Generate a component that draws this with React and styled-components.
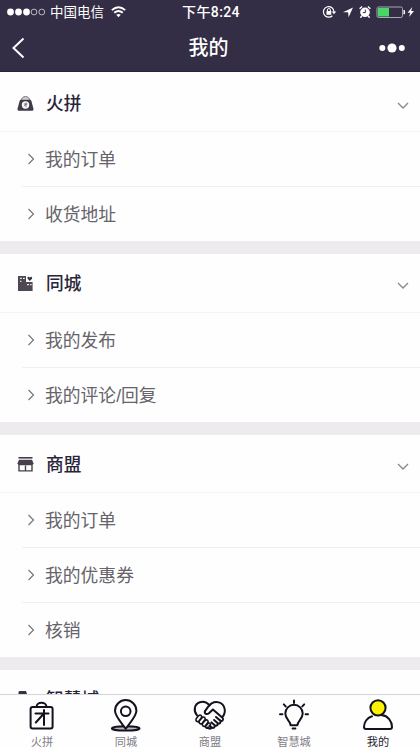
import React from "react";
import styled, { createGlobalStyle } from "styled-components";

const GlobalStyle = createGlobalStyle`
  * { box-sizing: border-box; }
  body {
    margin: 0;
    background: #fefefe;
    font-family: "Liberation Sans", "Noto Sans CJK SC", sans-serif;
  }
  svg { display: block; flex: none; }
`;

const Screen = styled.div`
  width: 420px;
  height: 748px;
  display: flex;
  flex-direction: column;
  overflow: hidden;
  background: #fefefe;
`;

const TopBar = styled.header`
  flex: none;
  height: 72px;
  background: #332d45;
  border-bottom: 1px solid #292438;
  color: #fff;
`;

const StatusBar = styled.div`
  height: 24px;
  display: grid;
  grid-template-columns: 1fr auto 1fr;
  align-items: center;
  padding: 0 5px 0 7px;
  font-size: 13.5px;
  line-height: 24px;
`;

const StatusSide = styled.div`
  display: flex;
  align-items: center;
  justify-content: ${(p) => (p.$end ? "flex-end" : "flex-start")};
`;

const Carrier = styled.span`
  margin: 0 7px 0 4px;
  padding-top: 1px;
  line-height: 23px;
`;

const Clock = styled.span`
  font-family: Roboto, "Noto Sans CJK SC", sans-serif;
  font-size: 14px;
  font-weight: 500;
  letter-spacing: 0.4px;
`;

const TitleBar = styled.div`
  height: 47px;
  display: grid;
  grid-template-columns: 1fr auto 1fr;
  align-items: center;
  padding: 0 15px 0 12px;
`;

const Title = styled.h1`
  margin: 0;
  padding-top: 1px;
  font-size: 20px;
  line-height: 28px;
  font-weight: 500;
`;

const More = styled.div`
  justify-self: end;
`;

const List = styled.main`
  flex: 1;
  min-height: 0;
  overflow: hidden;
`;

const Section = styled.section`
  border-bottom: 13px solid #edebee;
`;

const SectionHead = styled.div`
  height: ${(p) => p.$height}px;
  display: flex;
  align-items: center;
  padding: ${(p) => p.$top}px 11px 0 17px;
  border-bottom: 1px solid #f3f2f4;
`;

const SectionTitle = styled.h2`
  flex: 1;
  margin: 0 0 0 12px;
  padding-top: 1px;
  color: #29243a;
  font-size: 17.7px;
  line-height: 26px;
  font-weight: 500;
`;

const ToggleIcon = styled.span`
  padding-top: 5px;
`;

const Row = styled.div`
  height: 55px;
  margin-left: 22px;
  padding: 0 0 0 5px;
  display: flex;
  align-items: center;
  gap: 10px;
  color: #66636a;
  font-size: 17.8px;
  border-bottom: 1px solid #f0eff1;
  &:last-child {
    height: 54px;
    border-bottom: 0;
  }
`;

const RowLabel = styled.span`
  line-height: 26px;
  padding-top: 2px;
`;

const TabBar = styled.nav`
  flex: none;
  height: 54px;
  display: grid;
  grid-template-columns: repeat(5, 84px);
  border-top: 1px solid #d5d4d8;
  background: #fefefe;
`;

const Tab = styled.div`
  display: flex;
  flex-direction: column;
  align-items: center;
  padding-top: 4px;
  color: ${(p) => (p.$active ? "#26222f" : "#807d85")};
  font-size: 11.2px;
  line-height: 16px;
`;

const TabLabel = styled.span`
  margin-top: 2px;
`;

function Signal() {
  return (
    <svg width="39" height="10" viewBox="0 0 39 10">
      {[3.5, 11.5, 19.5].map((x) => <circle key={x} cx={x} cy="5" r="3.4" fill="#fff" />)}
      {[27, 34.8].map((x) => <circle key={x} cx={x} cy="5" r="2.9" fill="none" stroke="#c9c6d0" strokeWidth="0.9" />)}
    </svg>
  );
}

function Wifi() {
  return (
    <svg width="15" height="12" viewBox="0 0 15 12" fill="none" stroke="#fff" strokeWidth="1.8">
      <path d="M.8 4.2Q7.5-1.8 14.2 4.2M3.2 6.8q4.3-3.7 8.6 0" />
      <path d="M5.2 8.8q2.3-1.6 4.6 0L7.5 11.3Z" fill="#fff" stroke="none" />
    </svg>
  );
}

function StatusIcons() {
  return (
    <svg width="93" height="16" viewBox="0 0 93 16" fill="none">
      <path d="M10.4 11.7A5.3 5.3 0 1 1 12 8" stroke="#fff" strokeWidth="1.2" />
      <path d="m9.7 7.5 4.5 0-2.2 2.8Z" fill="#fff" />
      <rect x="4.5" y="7" width="4.8" height="3.8" fill="#fff" />
      <path d="M5.4 7.2V6a1.5 1.5 0 0 1 3 0v1.2" stroke="#fff" />
      <path d="m21 8.2 10-4.7-4.4 9.8-.5-5Z" fill="#fff" />
      <circle cx="43" cy="8.3" r="4.8" fill="#fff" />
      <path d="m37.6 4.8 2.5-2.3M48.4 4.8l-2.5-2.3M39.7 12l-1.3 1.7M46.3 12l1.3 1.7" stroke="#fff" strokeWidth="1.4" />
      <path d="M43.3 5.6v3h-2.5" stroke="#332d45" />
      <rect x="55" y="3" width="25.5" height="10.5" rx="1.6" stroke="#aaa6b2" />
      <rect x="56" y="4" width="11" height="8.5" fill="#48d767" />
      <path d="M82 6.2q1.5 2 0 4Z" fill="#fff" stroke="#fff" />
      <path d="m90.2 3-4.6 5.7h2.7L87 13l5-6.1h-2.8Z" fill="#fff" />
    </svg>
  );
}

function Chevron({ down }) {
  return down ? (
    <svg width="12" height="8" viewBox="0 0 12 8" fill="none" stroke="#88858c" strokeWidth="1.3">
      <path d="m1 1 5 5 5-5" />
    </svg>
  ) : (
    <svg width="8" height="12" viewBox="0 0 8 12" fill="none" stroke="#77747b" strokeWidth="1.2">
      <path d="m1.5 1 5 5-5 5" />
    </svg>
  );
}

const sectionIcons = {
  bag: (
    <>
      <path d="M4 6q.6-4.4 4.5-4.4T13 6" fill="#d0cfd3" stroke="#77737d" />
      <path d="M4 4.8h9q1 0 1.4 1.3l2 7.4q.5 2.3-1.8 2.3H2.4q-2.3 0-1.8-2.3l2-7.4Q3 4.8 4 4.8Z" fill="#403b49" />
      <circle cx="8.5" cy="10" r="3.7" fill="#fff" />
      <path d="M6.7 9h3.8M9 7.5v4.8M9 9l-2 2.3" stroke="#69646e" strokeWidth=".9" />
    </>
  ),
  city: (
    <>
      <path d="M1 1h8v6h6.6v9H1Z" fill="#4d4854" />
      <path d="M3 3.4h1.8M6 3.4h1.8M3 6.3h1.4M10 9.6h2M13 9.6h1.6" stroke="#e6e4e8" strokeWidth="1.3" />
      <path d="M12.8 6 10.6 3.7q-.6-1.7.8-1.9.9-.1 1.4.9.5-1 1.5-.9 1.4.3.7 1.9Z" fill="#373240" />
    </>
  ),
  shop: (
    <>
      <path d="M1.5 1.8h14" stroke="#373240" strokeWidth="1.5" />
      <path d="M2 3.7h13l1.5 3.6q-.2 2-2 2H2.5q-1.8 0-2-2Z" fill="#45404c" />
      <path d="M2 9v5.9h13V9M8.5 9.5v5.4" fill="none" stroke="#45404c" strokeWidth="1.4" />
    </>
  ),
  smart: <path d="M2.5 0h6.5l1 3h5.5v12h-14V1Z" fill="#373240" />,
};

function SectionIcon({ name }) {
  return <svg width="17" height="17" viewBox="0 0 17 17" fill="none">{sectionIcons[name]}</svg>;
}

const tabIcons = {
  bag: (
    <>
      <path d="M12.5 8C12.5 2.2 22.5 2.2 22.5 8" />
      <rect x="6.6" y="8" width="22" height="21.5" rx="2" />
      <path d="M11.5 14.5h13M20 11v15M19.5 15 11.8 23.5" />
    </>
  ),
  pin: (
    <>
      <ellipse cx="17.7" cy="29.4" rx="13.8" ry="2.2" fill="#bbb9bf" />
      <path d="M17.7 29.8C14 24.3 7 17.5 7 11.8a10.7 10.7 0 0 1 21.4 0C28.4 17.5 21.4 24.3 17.7 29.8Z" fill="#fefefe" />
      <circle cx="17.7" cy="12.3" r="4.8" />
    </>
  ),
  hands: (
    <>
      <path d="M5 16.3C1 11.5 2.5 5 7.8 3.3c3.8-1.2 7.3.2 9.8 3" />
      <path d="M30.3 18.2c4.4-5.1 2.8-12.9-3.4-14.8-4.5-1.3-8 .8-10.7 4.3L13 12.2c-1 2.6 1.8 3.8 3.9 2l4-3.7 9.6 8.3c1.7 2-.3 4-2.4 2.7L24 18" />
      <path d="M28.3 21.6c1.2 2.2-1.1 3.8-2.8 2.4l-3.4-3M25.5 24c.8 2.4-1.2 3.3-2.8 2.2l-3.2-2.8M22.7 26.2c.5 2.4-1.4 3.3-3 2.2l-2.1-1.7M19.7 28.4c-.8 2-2.6 1.6-4.4.1" />
      <path d="m4.3 19.6 2.4-3c1.7-1.5 3.7.1 2.7 2.2l-2.5 3.3c-1.8 1.5-3.8-.4-2.6-2.5ZM7.3 22l3-3.5c1.7-1.3 3.5.3 2.6 2.2l-2.7 3.6c-1.9 1.4-3.8-.3-2.9-2.3ZM10.5 24.6l2.8-3.3c1.8-1.2 3.4.4 2.6 2.2l-2.5 3.3c-1.9 1.4-3.8-.3-2.9-2.2ZM13.8 27l2.2-2.6c1.6-1 3 .4 2.3 2l-1.9 2.4c-1.6 1.2-3.4-.2-2.6-1.8Z" strokeWidth="1.6" />
    </>
  ),
  bulb: (
    <>
      <path d="M14.6 26.2C14.6 21.8 9.3 20.4 9.3 14.5a8.7 8.7 0 0 1 17.4 0c0 5.9-5.3 7.3-5.3 11.7ZM16.6 29.6h2.8" />
      <path d="M18 1.5v2.6M7.8 5.4l1.9 2M28.2 5.4l-1.9 2M4 15.3h2.4M29.6 15.3h2.4" />
    </>
  ),
  user: (
    <>
      <path d="M12 17.2C6.8 18.7 4 23.5 4 28q0 2 2 2h24q2 0 2-2C32 22.3 27.8 16.5 22 16.3" />
      <circle cx="18" cy="8.8" r="7.6" fill="#fff200" />
    </>
  ),
};

function TabIcon({ name }) {
  return (
    <svg width="36" height="33" viewBox="0 0 36 33" fill="none" stroke="#15111d" strokeWidth="2" strokeLinecap="round" strokeLinejoin="round">
      {tabIcons[name]}
    </svg>
  );
}

const sections = [
  { icon: "bag", title: "火拼", height: 60, top: 3, rows: ["我的订单", "收货地址"] },
  { icon: "city", title: "同城", height: 59, top: 1, rows: ["我的发布", "我的评论/回复"] },
  { icon: "shop", title: "商盟", height: 58, top: 1, rows: ["我的订单", "我的优惠券", "核销"] },
  { icon: "smart", title: "智慧城", height: 58, top: 1, rows: [] },
];

const tabs = [
  ["bag", "火拼"],
  ["pin", "同城"],
  ["hands", "商盟"],
  ["bulb", "智慧城"],
  ["user", "我的"],
];

export default function App() {
  return (
    <Screen>
      <GlobalStyle />
      <TopBar>
        <StatusBar>
          <StatusSide><Signal /><Carrier>中国电信</Carrier><Wifi /></StatusSide>
          <Clock>下午8:24</Clock>
          <StatusSide $end><StatusIcons /></StatusSide>
        </StatusBar>
        <TitleBar>
          <svg width="13" height="22" viewBox="0 0 13 22" fill="none" stroke="#fff" strokeWidth="2">
            <path d="m11.5 1.5-10 9.5 10 9.5" />
          </svg>
          <Title>我的</Title>
          <More>
            <svg width="26" height="10" viewBox="0 0 26 10" fill="#fff">
              <circle cx="3.3" cy="5" r="3" /><circle cx="13" cy="5" r="4.6" /><circle cx="22.8" cy="5" r="3" />
            </svg>
          </More>
        </TitleBar>
      </TopBar>
      <List>
        {sections.map((section) => (
          <Section key={section.title}>
            <SectionHead $height={section.height} $top={section.top}>
              <SectionIcon name={section.icon} />
              <SectionTitle>{section.title}</SectionTitle>
              <ToggleIcon><Chevron down /></ToggleIcon>
            </SectionHead>
            {section.rows.map((row) => <Row key={row}><Chevron /><RowLabel>{row}</RowLabel></Row>)}
          </Section>
        ))}
      </List>
      <TabBar>
        {tabs.map(([icon, label]) => (
          <Tab key={icon} $active={icon === "user"}>
            <TabIcon name={icon} />
            <TabLabel>{label}</TabLabel>
          </Tab>
        ))}
      </TabBar>
    </Screen>
  );
}
